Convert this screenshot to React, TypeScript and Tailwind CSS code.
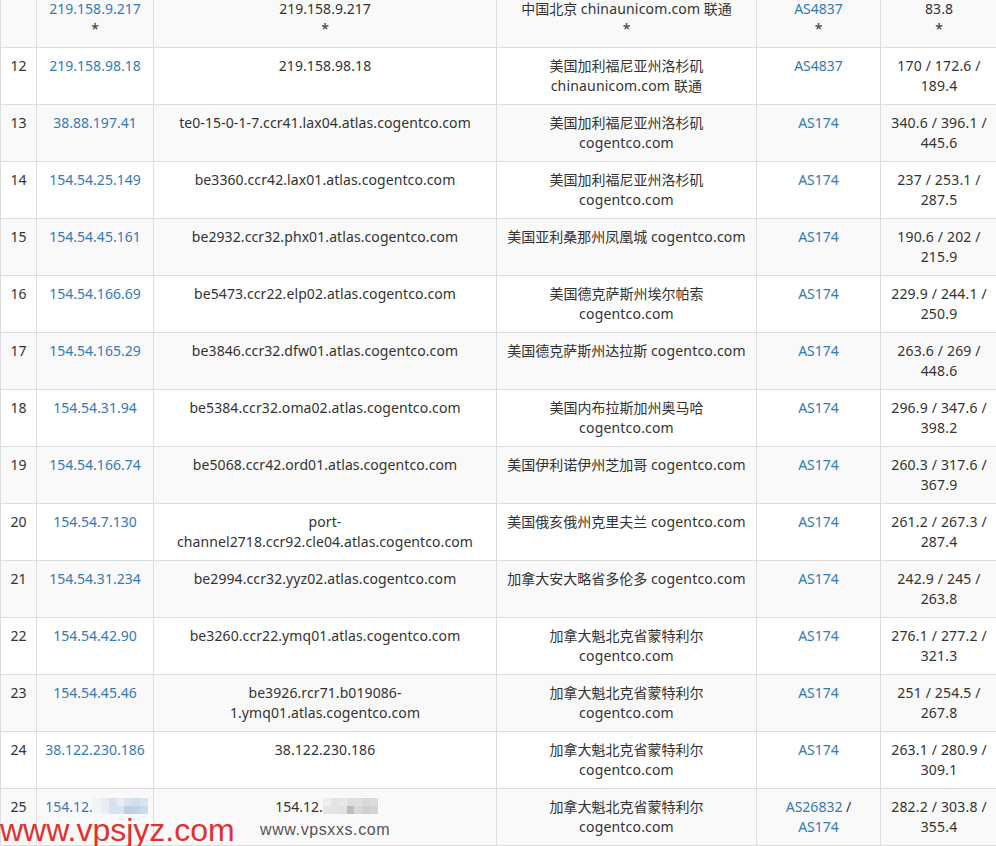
type Hop = {
  no: string;
  ip: string;
  host: string;
  geo: string;
  org: string;
  as: string;
  ms: string;
};

const hops: Hop[] = [
  { no: "12", ip: "219.158.98.18", host: "219.158.98.18", geo: "美国加利福尼亚州洛杉矶", org: "chinaunicom.com 联通", as: "AS4837", ms: "170 / 172.6 / 189.4" },
  { no: "13", ip: "38.88.197.41", host: "te0-15-0-1-7.ccr41.lax04.atlas.cogentco.com", geo: "美国加利福尼亚州洛杉矶", org: "cogentco.com", as: "AS174", ms: "340.6 / 396.1 / 445.6" },
  { no: "14", ip: "154.54.25.149", host: "be3360.ccr42.lax01.atlas.cogentco.com", geo: "美国加利福尼亚州洛杉矶", org: "cogentco.com", as: "AS174", ms: "237 / 253.1 / 287.5" },
  { no: "15", ip: "154.54.45.161", host: "be2932.ccr32.phx01.atlas.cogentco.com", geo: "美国亚利桑那州凤凰城", org: "cogentco.com", as: "AS174", ms: "190.6 / 202 / 215.9" },
  { no: "16", ip: "154.54.166.69", host: "be5473.ccr22.elp02.atlas.cogentco.com", geo: "美国德克萨斯州埃尔帕索", org: "cogentco.com", as: "AS174", ms: "229.9 / 244.1 / 250.9" },
  { no: "17", ip: "154.54.165.29", host: "be3846.ccr32.dfw01.atlas.cogentco.com", geo: "美国德克萨斯州达拉斯", org: "cogentco.com", as: "AS174", ms: "263.6 / 269 / 448.6" },
  { no: "18", ip: "154.54.31.94", host: "be5384.ccr32.oma02.atlas.cogentco.com", geo: "美国内布拉斯加州奥马哈", org: "cogentco.com", as: "AS174", ms: "296.9 / 347.6 / 398.2" },
  { no: "19", ip: "154.54.166.74", host: "be5068.ccr42.ord01.atlas.cogentco.com", geo: "美国伊利诺伊州芝加哥", org: "cogentco.com", as: "AS174", ms: "260.3 / 317.6 / 367.9" },
  { no: "20", ip: "154.54.7.130", host: "port-channel2718.ccr92.cle04.atlas.cogentco.com", geo: "美国俄亥俄州克里夫兰", org: "cogentco.com", as: "AS174", ms: "261.2 / 267.3 / 287.4" },
  { no: "21", ip: "154.54.31.234", host: "be2994.ccr32.yyz02.atlas.cogentco.com", geo: "加拿大安大略省多伦多", org: "cogentco.com", as: "AS174", ms: "242.9 / 245 / 263.8" },
  { no: "22", ip: "154.54.42.90", host: "be3260.ccr22.ymq01.atlas.cogentco.com", geo: "加拿大魁北克省蒙特利尔", org: "cogentco.com", as: "AS174", ms: "276.1 / 277.2 / 321.3" },
  { no: "23", ip: "154.54.45.46", host: "be3926.rcr71.b019086-1.ymq01.atlas.cogentco.com", geo: "加拿大魁北克省蒙特利尔", org: "cogentco.com", as: "AS174", ms: "251 / 254.5 / 267.8" },
  { no: "24", ip: "38.122.230.186", host: "38.122.230.186", geo: "加拿大魁北克省蒙特利尔", org: "cogentco.com", as: "AS174", ms: "263.1 / 280.9 / 309.1" },
];

const cell = "border border-[#ddd] px-2 py-2 text-center align-top";
const link = "text-[#337ab7]";
const wide = "tracking-[0.18px]";
const hostWide = "tracking-[0.09px]";

const blueMosaic = [
  "bg-[#f1f4f7]", "bg-[#e7edf3]", "bg-[#d5e1ed]", "bg-[#e6edf4]", "bg-[#d8e3ee]", "bg-[#d1deeb]", "bg-[#d9e4ef]",
  "bg-[#f3f6f8]", "bg-[#e9eff4]", "bg-[#d8e3ee]", "bg-[#dae4ee]", "bg-[#bdd0e3]", "bg-[#c1d3e5]", "bg-[#cbdaea]",
];
const greyMosaic = [
  "bg-[#eeeeee]", "bg-[#e6e2e2]", "bg-[#e8e8e8]", "bg-[#dedede]", "bg-[#e2dede]", "bg-[#d8d8dc]", "bg-[#dcdcdc]",
  "bg-[#e8e4e4]", "bg-[#e4e4e4]", "bg-[#dee2e8]", "bg-[#bcbcbc]", "bg-[#d8d8da]", "bg-[#cfcfcf]", "bg-[#d4d4d4]",
];

function Mosaic({ blocks, className }: { blocks: string[]; className: string }) {
  return (
    <div className={`absolute grid grid-cols-7 grid-rows-2 h-[16px] w-[55px] ${className}`}>
      {blocks.map((b, i) => (
        <div key={i} className={b} />
      ))}
    </div>
  );
}

export default function App() {
  return (
    <div className="relative h-[846px] w-[996px] overflow-hidden bg-white text-[14px] leading-5 text-[#333] font-['Noto_Sans','Noto_Sans_CJK_SC',sans-serif]">
      <table className="-mt-[10px] w-[997px] table-fixed border-collapse">
        <colgroup>
          <col className="w-[36px]" />
          <col className="w-[117px]" />
          <col className="w-[343px]" />
          <col className="w-[260px]" />
          <col className="w-[124px]" />
          <col className="w-[117px]" />
        </colgroup>
        <tbody>
          {/* row 11 is cut by the top of the shot */}
          <tr className="bg-[#f9f9f9]">
            <td className={cell}></td>
            <td className={cell}>
              <div className={link}>219.158.9.217</div>
              <div>*</div>
            </td>
            <td className={cell}>
              <div>219.158.9.217</div>
              <div>*</div>
            </td>
            <td className={cell}>
              <div>
                中国北京 <span className={wide}>chinaunicom.com</span> 联通
              </div>
              <div>*</div>
            </td>
            <td className={cell}>
              <div className={link}>AS4837</div>
              <div>*</div>
            </td>
            <td className={cell}>
              <div>83.8</div>
              <div>*</div>
            </td>
          </tr>
          {hops.map((h, i) => (
            <tr key={h.no} className={i % 2 === 1 ? "bg-[#f9f9f9]" : "bg-white"}>
              <td className={cell}>{h.no}</td>
              <td className={cell}>
                <span className={link}>{h.ip}</span>
              </td>
              <td className={`${cell} ${hostWide}`}>{h.host}</td>
              <td className={cell}>
                {h.geo} <span className={wide}>{h.org}</span>
              </td>
              <td className={cell}>
                <span className={link}>{h.as}</span>
              </td>
              <td className={`${cell} ${wide}`}>{h.ms}</td>
            </tr>
          ))}
          <tr className="bg-[#f9f9f9]">
            <td className={cell}>25</td>
            <td className={cell}>
              <span className={link}>
                154.12.<span className="invisible">000.000</span>
              </span>
            </td>
            <td className={cell}>
              154.12.<span className="invisible">000.000</span>
            </td>
            <td className={cell}>
              加拿大魁北克省蒙特利尔 <span className={wide}>cogentco.com</span>
            </td>
            <td className={cell}>
              <span className={link}>AS26832</span> / <span className={link}>AS174</span>
            </td>
            <td className={`${cell} ${wide}`}>282.2 / 303.8 / 355.4</td>
          </tr>
        </tbody>
      </table>

      {/* mosaic over the hidden ip, then the watermarks */}
      <Mosaic blocks={blueMosaic} className="left-[93px] top-[798px]" />
      <Mosaic blocks={greyMosaic} className="left-[323px] top-[798px]" />
      <div className="absolute left-0 top-[812px] text-[32px] leading-9 text-[#e03131] font-['Liberation_Sans',sans-serif]">www.vpsjyz.com</div>
      <div className="absolute left-[260px] top-[820px] text-[16px] leading-5 tracking-[0.6px] text-[#555] font-['Liberation_Sans',sans-serif]">www.vpsxxs.com</div>
    </div>
  );
}
